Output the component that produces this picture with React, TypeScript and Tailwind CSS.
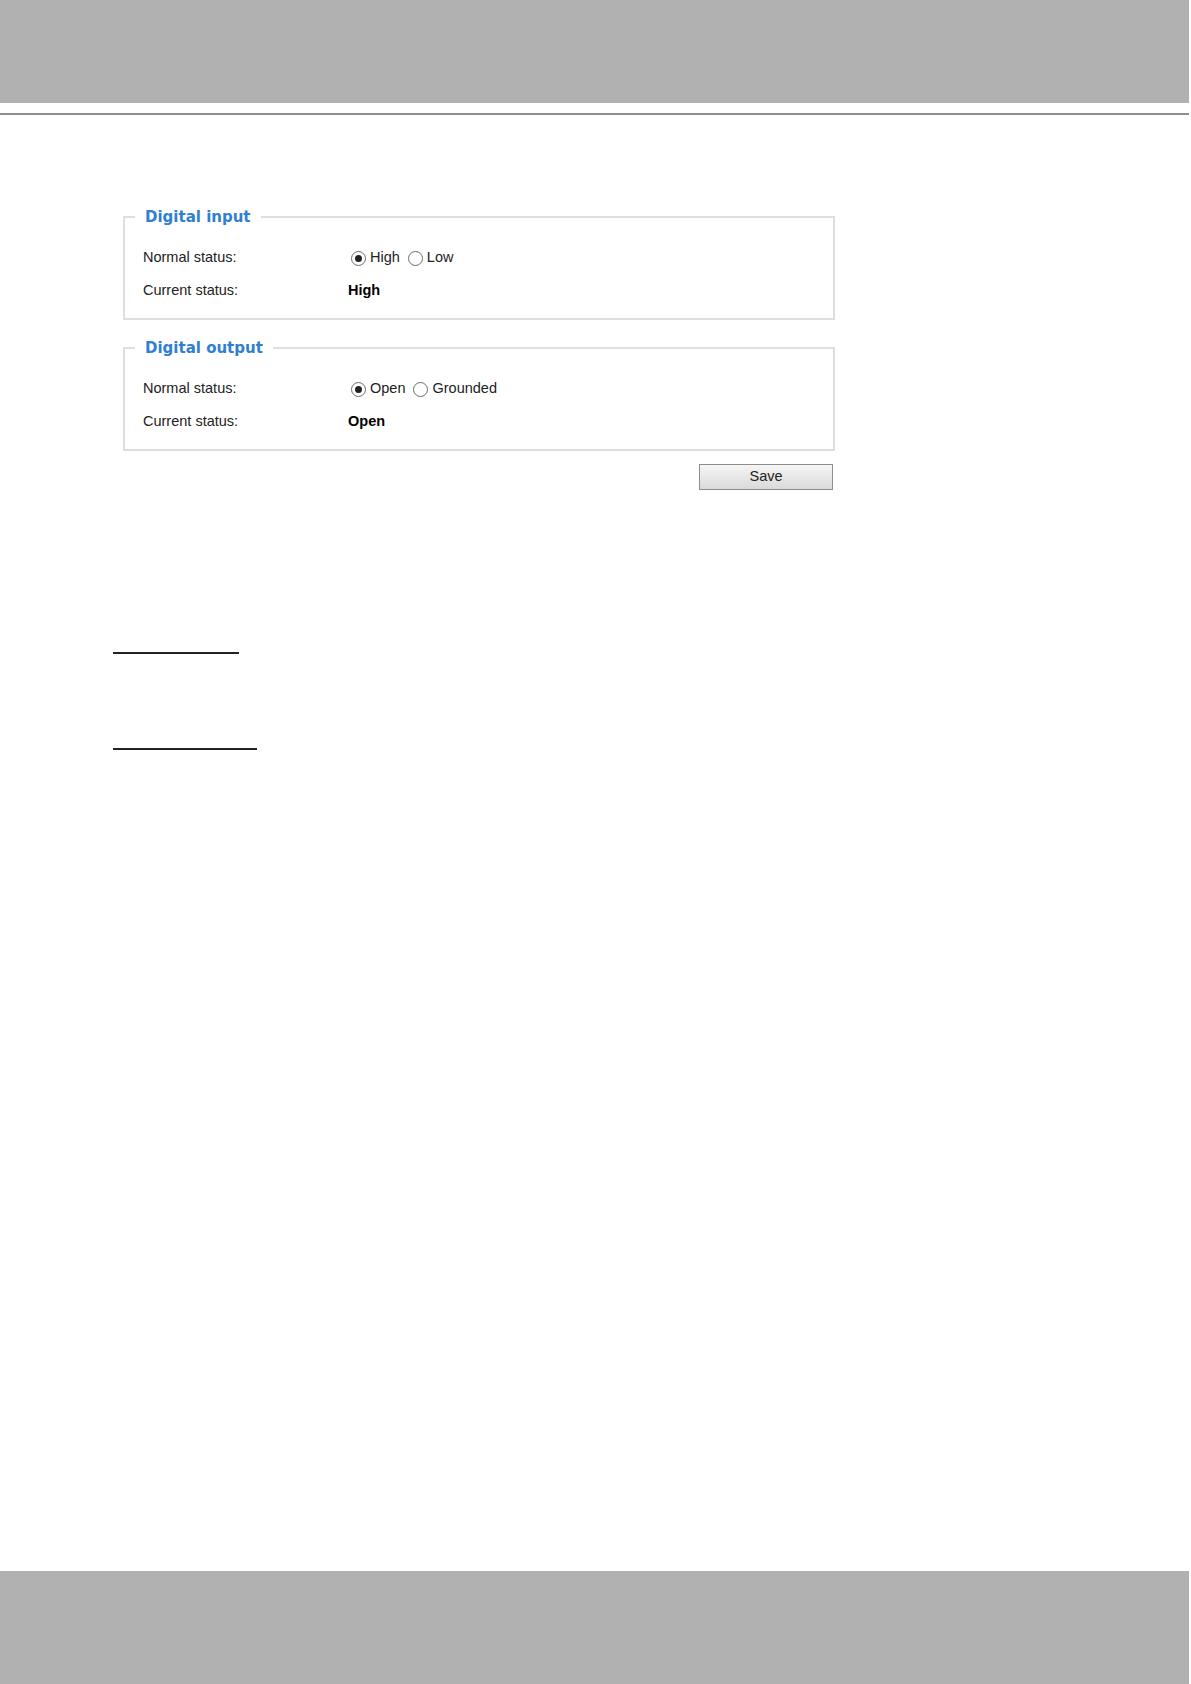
import React from "react";

function Radio({ checked }: { checked?: boolean }) {
  return (
    <span className="flex h-[15px] w-[15px] shrink-0 items-center justify-center rounded-full border border-[#6b6b6b] bg-white">
      {checked ? <span className="h-[7px] w-[7px] rounded-full bg-[#222]" /> : null}
    </span>
  );
}

function Section({
  title,
  opts,
  value,
}: {
  title: string;
  opts: [string, string];
  value: string;
}) {
  return (
    <fieldset className="m-0 w-[712px] border-2 border-[#dedede] px-[10px] pb-[10px] pt-0">
      <legend
        className="px-[10px] text-[15px] font-bold leading-[18px] text-[#2f80d1]"
        style={{ fontFamily: '"DejaVu Sans", Verdana, sans-serif' }}
      >
        {title}
      </legend>
      <div className="pl-[8px] pt-[16px] text-[14.5px] text-[#222]">
        <div className="flex h-[33px] items-center">
          <div className="w-[205px]">Normal status:</div>
          <div className="flex items-center">
            <div className="ml-[3px] flex items-center"><Radio checked /></div>
            <span className="ml-[4px]">{opts[0]}</span>
            <div className="ml-[8px] flex items-center"><Radio /></div>
            <span className="ml-[4px]">{opts[1]}</span>
          </div>
        </div>
        <div className="flex h-[33px] items-center">
          <div className="w-[205px]">Current status:</div>
          <div className="font-bold text-black">{value}</div>
        </div>
      </div>
    </fieldset>
  );
}

export default function App() {
  return (
    <div
      className="relative h-[1684px] w-[1191px] bg-white"
      style={{ fontFamily: '"Liberation Sans", Arial, sans-serif' }}
    >
      <div className="h-[103px] w-[1189px] bg-[#b1b1b1]" />
      <div className="mt-[10px] h-[1.5px] w-[1189px] bg-[#8f8f8f]" />
      <div className="ml-[123px] mt-[93px] flex w-[714px] flex-col">
        <Section title="Digital input" opts={["High", "Low"]} value="High" />
        <div className="mt-[19px]">
          <Section title="Digital output" opts={["Open", "Grounded"]} value="Open" />
        </div>
        <div className="mt-[13px] flex justify-end pr-[4px]">
          <button className="h-[26px] w-[134px] border border-[#8d8d8d] bg-gradient-to-b from-[#f5f5f5] to-[#dadada] text-[14.5px] text-[#222]">
            Save
          </button>
        </div>
      </div>
      <div className="ml-[113px] mt-[162px] h-[2px] w-[126px] bg-[#222]" />
      <div className="ml-[113px] mt-[94px] h-[2px] w-[144px] bg-[#222]" />
      <div className="absolute bottom-0 left-0 h-[113px] w-[1189px] bg-[#b1b1b1]" />
    </div>
  );
}
